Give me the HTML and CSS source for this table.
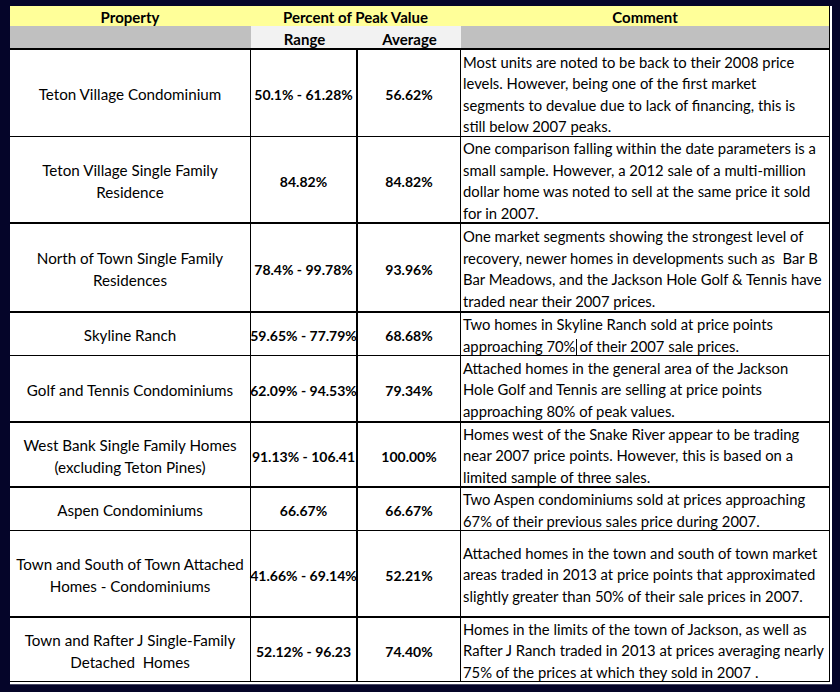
FILE: index.html
```html
<!DOCTYPE html>
<html>
<head>
<meta charset="utf-8">
<link rel="stylesheet" href="styles.css">
</head>
<body>
<div class="frame">
  <div class="sheet">
    <div class="table">
      <div class="head1">
        <div class="hcell">Property</div>
        <div class="hcell">Percent of Peak Value</div>
        <div class="hcell">Comment</div>
      </div>
      <div class="head2">
        <div class="hcell gray"></div>
        <div class="hcell light">Range</div>
        <div class="hcell light">Average</div>
        <div class="hcell gray"></div>
      </div>

      <div class="row thick h86">
        <div class="cell prop"><div class="txt">Teton Village Condominium</div></div>
        <div class="cell val range"><div class="txt">50.1% - 61.28%</div></div>
        <div class="cell val avg"><div class="txt">56.62%</div></div>
        <div class="cell comment"><div class="txt">Most units are noted to be back to their 2008 price<br>levels. However, being one of the first market<br>segments to devalue due to lack of financing, this is<br>still below 2007 peaks.</div></div>
      </div>

      <div class="row thin h85">
        <div class="cell prop"><div class="txt">Teton Village Single Family<br>Residence</div></div>
        <div class="cell val range"><div class="txt">84.82%</div></div>
        <div class="cell val avg"><div class="txt">84.82%</div></div>
        <div class="cell comment"><div class="txt">One comparison falling within the date parameters is a<br>small sample. However, a 2012 sale of a multi-million<br>dollar home was noted to sell at the same price it sold<br>for in 2007.</div></div>
      </div>

      <div class="row thick h87">
        <div class="cell prop"><div class="txt">North of Town Single Family<br>Residences</div></div>
        <div class="cell val range"><div class="txt">78.4% - 99.78%</div></div>
        <div class="cell val avg"><div class="txt">93.96%</div></div>
        <div class="cell comment"><div class="txt">One market segments showing the strongest level of<br>recovery, newer homes in developments such as&nbsp; Bar B<br>Bar Meadows, and the Jackson Hole Golf &amp; Tennis have<br>traded near their 2007 prices.</div></div>
      </div>

      <div class="row thick h42">
        <div class="cell prop"><div class="txt">Skyline Ranch</div></div>
        <div class="cell val range"><div class="txt">59.65% - 77.79%</div></div>
        <div class="cell val avg"><div class="txt">68.68%</div></div>
        <div class="cell comment"><div class="txt">Two homes in Skyline Ranch sold at price points<br>approaching 70%<span class="caret"></span>of their 2007 sale prices.</div></div>
      </div>

      <div class="row thin h65">
        <div class="cell prop"><div class="txt">Golf and Tennis Condominiums</div></div>
        <div class="cell val range"><div class="txt">62.09% - 94.53%</div></div>
        <div class="cell val avg"><div class="txt">79.34%</div></div>
        <div class="cell comment"><div class="txt">Attached homes in the general area of the Jackson<br>Hole Golf and Tennis are selling at price points<br>approaching 80% of peak values.</div></div>
      </div>

      <div class="row thick h63">
        <div class="cell prop"><div class="txt">West Bank Single Family Homes<br>(excluding Teton Pines)</div></div>
        <div class="cell val range"><div class="txt">91.13% - 106.41</div></div>
        <div class="cell val avg"><div class="txt">100.00%</div></div>
        <div class="cell comment"><div class="txt">Homes west of the Snake River appear to be trading<br>near 2007 price points. However, this is based on a<br>limited sample of three sales.</div></div>
      </div>

      <div class="row thick h42">
        <div class="cell prop"><div class="txt">Aspen Condominiums</div></div>
        <div class="cell val range"><div class="txt">66.67%</div></div>
        <div class="cell val avg"><div class="txt">66.67%</div></div>
        <div class="cell comment"><div class="txt">Two Aspen condominiums sold at prices approaching<br>67% of their previous sales price during 2007.</div></div>
      </div>

      <div class="row thin h85">
        <div class="cell prop"><div class="txt">Town and South of Town Attached<br>Homes - Condominiums</div></div>
        <div class="cell val range"><div class="txt">41.66% - 69.14%</div></div>
        <div class="cell val avg"><div class="txt">52.21%</div></div>
        <div class="cell comment"><div class="txt">Attached homes in the town and south of town market<br>areas traded in 2013 at price points that approximated<br>slightly greater than 50% of their sale prices in 2007.</div></div>
      </div>

      <div class="row thick h63">
        <div class="cell prop"><div class="txt">Town and Rafter J Single-Family<br>Detached&nbsp; Homes</div></div>
        <div class="cell val range"><div class="txt">52.12% - 96.23</div></div>
        <div class="cell val avg"><div class="txt">74.40%</div></div>
        <div class="cell comment"><div class="txt">Homes in the limits of the town of Jackson, as well as<br>Rafter J Ranch traded in 2013 at prices averaging nearly<br>75% of the prices at which they sold in 2007 .</div></div>
      </div>
    </div>
  </div>
</div>
</body>
</html>
```

FILE: styles.css
```css
html, body {
  margin: 0;
  padding: 0;
  background: #050529;
}

.frame {
  width: 840px;
  height: 692px;
  box-sizing: border-box;
  padding: 6px 8px 0 10px;
  font-family: Lato, "Open Sans", sans-serif;
  color: #000;
}

.sheet {
  width: 822px;
  background: #fff;
  padding-bottom: 2px;
  border-bottom: 1px solid #4a4a66;
}

.table {
  width: 820px;
  box-sizing: border-box;
  border-right: 1px solid #000;
  border-bottom: 1px solid #000;
}

.head1,
.head2,
.row {
  display: grid;
  grid-template-columns: 241px 107px 103px 1fr;
}

.head1 {
  grid-template-columns: 240px 211px 1fr;
  height: 20px;
  background: #ffff99;
}

.head2 {
  height: 22px;
}

.hcell {
  display: flex;
  align-items: center;
  justify-content: center;
  box-sizing: border-box;
  font-weight: 700;
  font-size: 15px;
  line-height: 18px;
}

.head1 .hcell {
  padding-top: 2px;
}

.head2 .hcell {
  padding-top: 4px;
}

.gray {
  background: #c0c0c0;
}

.light {
  background: #f2f2f2;
}

.row {
  box-sizing: border-box;
  border-top: 1px solid #000;
}

.row.thick {
  border-top-width: 2px;
}

.thick.h86 { height: 88px; }
.thin.h85 { height: 86px; }
.thick.h87 { height: 89px; }
.thick.h42 { height: 44px; }
.thin.h65 { height: 66px; }
.thick.h63 { height: 65px; }

.cell {
  display: flex;
  align-items: center;
  box-sizing: border-box;
  line-height: 21.5px;
  white-space: nowrap;
  padding-top: 4px;
}

.prop {
  justify-content: center;
  text-align: center;
  font-size: 15.2px;
  border-right: 1px solid #000;
}

.val {
  justify-content: center;
  font-weight: 700;
  font-size: 14px;
}

.range {
  border-right: 2px solid #000;
}

.avg {
  border-right: 1px solid #000;
}

.comment {
  padding-top: 3px;
  padding-left: 2px;
  font-size: 14.8px;
  overflow: hidden;
}

.caret {
  display: inline-block;
  width: 1px;
  height: 17px;
  background: #000;
  vertical-align: -4px;
  margin: 0 2px 0 1px;
}
```
